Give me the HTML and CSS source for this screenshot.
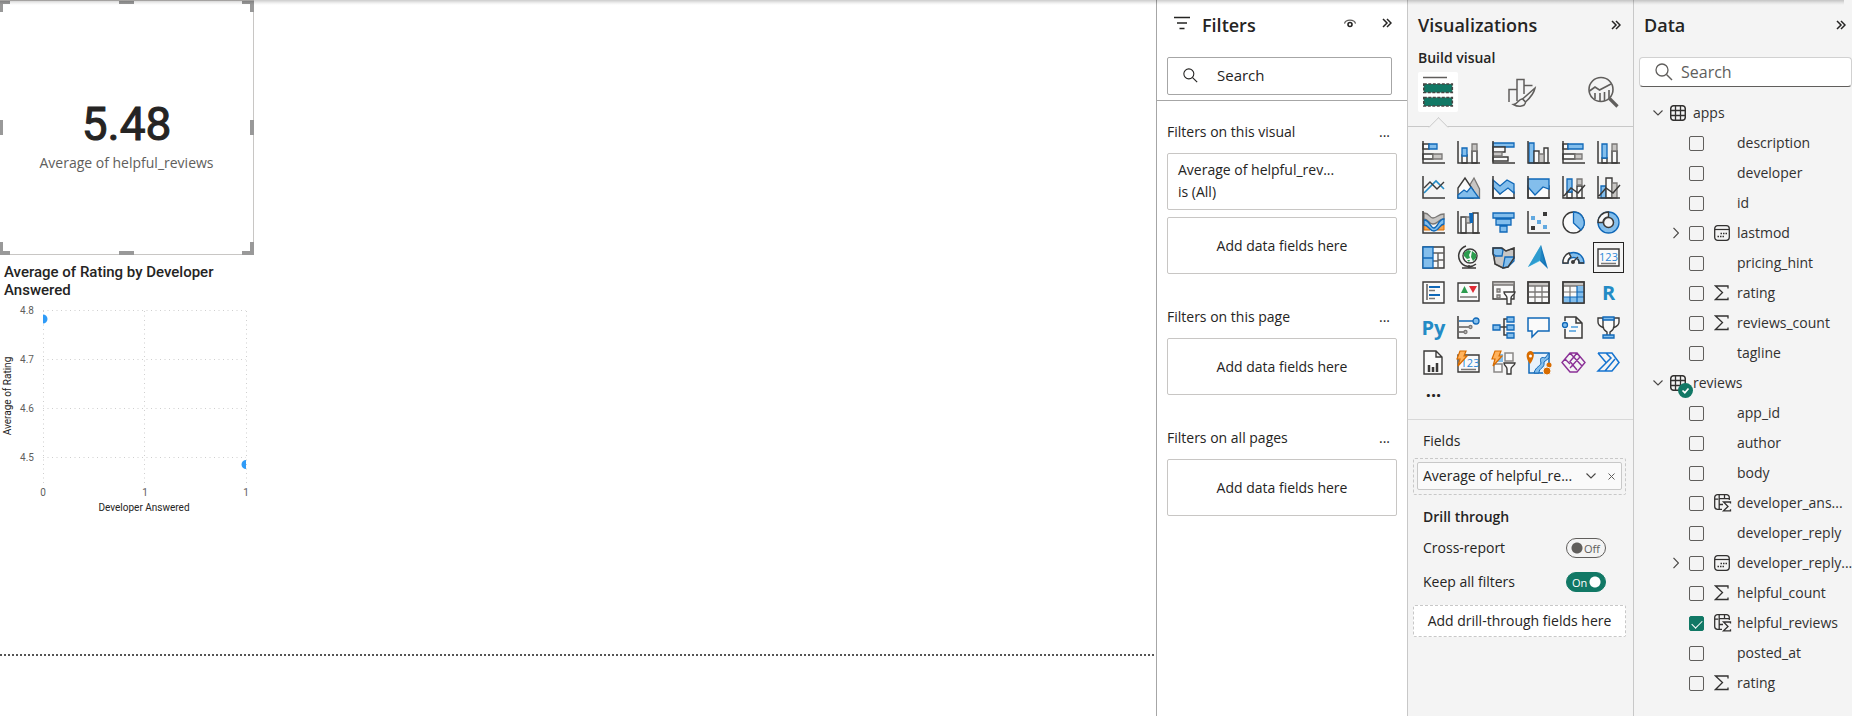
FILE: index.html
```html
<!DOCTYPE html>
<html lang="en">
<head>
<meta charset="utf-8">
<title>Report editor</title>
<link rel="stylesheet" href="styles.css">
</head>
<body>
<svg class="defs" aria-hidden="true">
  <symbol id="collapse" viewBox="0 0 10 10"><path d="M1 1l4 4-4 4M5 1l4 4-4 4" fill="none" stroke="#252423" stroke-width="1.5"/></symbol>
  <symbol id="search" viewBox="0 0 18 18"><circle cx="7" cy="7" r="6" fill="none" stroke="currentColor" stroke-width="1.3"/><path d="M11.5 11.5L17 17" stroke="currentColor" stroke-width="1.4"/></symbol>
  <symbol id="down" viewBox="0 0 10 6"><path d="M.5.5L5 5 9.500.5" fill="none" stroke="#484644" stroke-width="1.1"/></symbol>
  <symbol id="right" viewBox="0 0 6 12"><path d="M.5.8L5.500 6 .5 11.200" fill="none" stroke="#484644" stroke-width="1.2"/></symbol>
  <symbol id="table" viewBox="0 0 16 16"><rect x=".7" y=".7" width="14.600" height="14.600" rx="3" fill="none" stroke="#323130" stroke-width="1.500"/><path d="M5.500 1v14M10.500 1v14M1 5.500h14M1 10.500h14" stroke="#323130" stroke-width="1.300"/></symbol>
  <symbol id="calendar" viewBox="0 0 16 16"><rect x=".7" y=".7" width="14.600" height="14.600" rx="3" fill="none" stroke="#323130" stroke-width="1.300"/><path d="M1 4.500h14" stroke="#323130" stroke-width="1.200"/><path d="M6.500 8.500h1.500M9 8.500h1.500M11.500 8.500h1.500M3.500 11.500h1.500M6 11.500h1.500M8.500 11.500h1.500" stroke="#323130" stroke-width="1.500"/></symbol>
  <symbol id="sigma" viewBox="0 0 16 16"><path d="M14 3.500V1H1.500L8.500 7.500 1.500 14.500H14V12.500" fill="none" stroke="#323130" stroke-width="1.300"/></symbol>
  <symbol id="calc" viewBox="0 0 18 18"><path d="M15.300 6V3.500A2.800 2.800 0 0 0 12.500.7h-9A2.800 2.800 0 0 0 .7 3.500v9a2.800 2.800 0 0 0 2.800 2.800H8M5.200 1v14M.7 5.200h3.500M5 4.700h10M5 10.500h4M10.500 1v4" fill="none" stroke="#323130" stroke-width="1.300"/><path d="M16.500 9.500V8H9.500l4.500 4.500-4.500 4.300h7v-1.600" fill="none" stroke="#323130" stroke-width="1.300"/></symbol>
</svg>
<div class="app">
  <main class="canvas">
    <section class="card">
      <i class="handle tl"></i><i class="handle tc"></i><i class="handle tr"></i>
      <i class="handle ml"></i><i class="handle mr"></i>
      <i class="handle bl"></i><i class="handle bc"></i><i class="handle br"></i>
      <div class="card-value">5.48</div>
      <div class="card-label">Average of helpful_reviews</div>
    </section>
    <section class="scatter">
      <h2 class="chart-title">Average of Rating by Developer Answered</h2>
      <svg class="chart" width="256" height="220" viewBox="0 0 256 220">
        <g stroke="#cfcfcf" stroke-dasharray="1 3.500" fill="none">
          <path d="M43 11.500H246M43 60.500H246M43 109.500H246M43 158.500H246"/>
          <path d="M43.500 12V186M144.500 12V186M246.500 12V186"/>
        </g>
        <path d="M43 15.500a4.500 4.500 0 0 1 0 9zM246 161a4.500 4.500 0 0 0 0 9z" fill="#2f9bf7"/>
        <g class="tick">
          <text x="34" y="15" text-anchor="end">4.8</text><text x="34" y="64" text-anchor="end">4.7</text>
          <text x="34" y="113" text-anchor="end">4.6</text><text x="34" y="162" text-anchor="end">4.5</text>
          <text x="43" y="197" text-anchor="middle">0</text><text x="145" y="197" text-anchor="middle">1</text><text x="246" y="197" text-anchor="middle">1</text>
        </g>
        <g class="axis">
          <text x="144" y="212" text-anchor="middle">Developer Answered</text>
          <text transform="translate(11 97) rotate(-90)" text-anchor="middle">Average of Rating</text>
        </g>
      </svg>
    </section>
    <div class="page-end"></div>
  </main>

  <aside class="filters">
    <header class="filters-head">
      <svg width="16" height="14" viewBox="0 0 16 14"><path d="M0 1.500h16M3 7h10M5.500 12.500h5" stroke="#252423" stroke-width="1.500"/></svg>
      <h2>Filters</h2>
      <button class="icon-btn eye" aria-label="Show filters"><svg width="12" height="9" viewBox="0 0 12 9"><path d="M.5 4.500C1.500 0 10.500 0 11.500 4.500" fill="none" stroke="#605e5c" stroke-width="1.200"/><circle cx="6" cy="5.500" r="2" fill="none" stroke="#252423" stroke-width="1.600"/></svg></button>
      <button class="icon-btn" aria-label="Collapse filters"><svg width="10" height="10"><use href="#collapse"/></svg></button>
    </header>
    <div class="filters-search-row">
      <label class="filters-search"><svg width="15" height="15"><use href="#search"/></svg><input type="text" placeholder="Search" aria-label="Search filters"></label>
    </div>
    <div class="filters-body">
      <section class="filter-group">
        <div class="filter-title"><h3>Filters on this visual</h3><button class="more" aria-label="More options">...</button></div>
        <div class="filter-box filter-item"><span>Average of helpful_rev...</span><span>is (All)</span></div>
        <div class="filter-box drop">Add data fields here</div>
      </section>
      <section class="filter-group">
        <div class="filter-title"><h3>Filters on this page</h3><button class="more" aria-label="More options">...</button></div>
        <div class="filter-box drop">Add data fields here</div>
      </section>
      <section class="filter-group">
        <div class="filter-title"><h3>Filters on all pages</h3><button class="more" aria-label="More options">...</button></div>
        <div class="filter-box drop">Add data fields here</div>
      </section>
    </div>
  </aside>

  <aside class="viz">
    <header class="pane-head"><h2>Visualizations</h2><button class="icon-btn" aria-label="Collapse visualizations"><svg width="10" height="10"><use href="#collapse"/></svg></button></header>
    <h3 class="build">Build visual</h3>
    <div class="tabs">
      <button class="tab active" aria-label="Build visual"><svg width="40" height="40" viewBox="0 0 40 40"><path d="M5 5.500h24" stroke="#605e5c" stroke-width="1.500"/><g fill="#117865" stroke="#484644" stroke-width="1.600" stroke-dasharray="3 1.500"><rect x="5.800" y="12" width="28.500" height="8.500"/><rect x="5.800" y="25.500" width="28.500" height="8.500"/></g></svg></button>
      <button class="tab" aria-label="Format visual"><svg width="40" height="40" viewBox="2 0 40 40"><g fill="none" stroke="#605e5c" stroke-width="1.500"><path d="M10 30V17.500h8M18 29V7.500h7V22M25 13.500h8.500"/><path fill="#f4f4f4" d="M36 16L23.500 27l3 3C31 26 35 21 36 16z"/><path fill="#f4f4f4" d="M23.500 27c-4-.5-4 5-9 5.500 5 3 12 2 12-2.500z"/></g></svg></button>
      <button class="tab" aria-label="Analytics"><svg width="40" height="40" viewBox="0 0 40 40"><g fill="none" stroke="#605e5c" stroke-width="1.600"><circle cx="18" cy="17.500" r="12"/><path d="M6.500 19l5.500-4 4.500 3L28 12M12 27v-6M17 29v-8M21.500 29v-9M26 26v-8"/><path stroke-width="3.200" d="M26.500 26.500L34.500 34.500"/></g></svg></button>
    </div>
    <div class="gallery">
      <button aria-label="Stacked bar chart"><svg viewBox="0 0 23 23"><g class="w"><path d="M1 3h6v5H1zM1 13h10v5H1z"/></g><path class="b" d="M7 3h8v5H7z"/><path class="g" d="M11 13h9v5h-9z"/><path class="k" d="M1 0V22H23"/></svg></button>
      <button aria-label="Stacked column chart"><svg viewBox="0 0 23 23"><path class="w" d="M5 14h5v8H5zM15 10h5v12h-5z"/><path class="b" d="M5 7h5v8H5z"/><path class="g" d="M15 3h5v7h-5z"/><path class="k" d="M1 0V22H23"/></svg></button>
      <button aria-label="Clustered bar chart"><svg viewBox="0 0 23 23"><path class="b" d="M1 2h21v4H1z"/><path class="w" d="M1 6h12v5H1zM1 16h15v4H1z"/><path class="g" d="M1 11h9v4H1z"/><path class="k" d="M1 0V22H23"/></svg></button>
      <button aria-label="Clustered column chart"><svg viewBox="0 0 23 23"><path class="b" d="M2 2h5v20H2z"/><path class="w" d="M7 10h5v12H7zM17 7h4v15h-4z"/><path class="g" d="M12 13h5v9h-5z"/><path class="k" d="M1 0V22H23"/></svg></button>
      <button aria-label="100% stacked bar chart"><svg viewBox="0 0 23 23"><path class="w" d="M1 3h5v5H1zM1 13h12v5H1z"/><path class="b" d="M6 3h15v5H6z"/><path class="g" d="M13 13h7v5h-7z"/><path class="k" d="M1 0V22H23"/></svg></button>
      <button aria-label="100% stacked column chart"><svg viewBox="0 0 23 23"><path class="w" d="M5 17h5v5H5zM15 10h5v12h-5z"/><path class="b" d="M5 3h5v14H5z"/><path class="g" d="M15 3h5v7h-5z"/><path class="k" d="M1 0V22H23"/></svg></button>

      <button aria-label="Line chart"><svg viewBox="0 0 23 23"><path class="bl" d="M2 17L14 5l8 8"/><path class="kl" d="M2 12l6-6 7 7 7-7"/><path class="k" d="M1 0V22H23"/></svg></button>
      <button aria-label="Area chart"><svg viewBox="0 0 23 23"><path class="g" d="M11 22V12L17 2l5.500 11v9z"/><path class="w" d="M1 22V12L8 2l8 12v8z"/><path class="b" d="M1 22v-3l6-5 3 2 4-5 8 11z"/></svg></button>
      <button aria-label="Stacked area chart"><svg viewBox="0 0 23 23"><path class="w" d="M1 10l7 8 8-8 6 6v6H1z"/><path class="b" d="M1 4l7 6 7-6 7 4v9l-6-5-8 6-7-7z"/><path class="k" d="M1 0V22H23"/></svg></button>
      <button aria-label="100% stacked area chart"><svg viewBox="0 0 23 23"><path class="w" d="M1 10h21v12H1z"/><path class="b" d="M1 3h21v10l-6-2-8 8-7-8z"/><path class="k" d="M1 0V22H23"/></svg></button>
      <button aria-label="Line and stacked column chart"><svg viewBox="0 0 23 23"><path class="w" d="M5 16h5v6H5zM15 10h5v12h-5z"/><path class="b" d="M5 3h5v13H5z"/><path class="g" d="M15 3h5v6h-5z"/><path class="k" d="M1 0V22H23M2 20l7-8 7 5 7-8"/></svg></button>
      <button aria-label="Line and clustered column chart"><svg viewBox="0 0 23 23"><path class="b" d="M4 10h5v12H4z"/><path class="w" d="M9 2h6v20H9z"/><path class="g" d="M15 7h5v15h-5z"/><path class="k" d="M1 0V22H23M2 20l7-8 7 5 7-8"/></svg></button>

      <button aria-label="Ribbon chart"><svg viewBox="0 0 23 23"><path d="M2 14h6v5H2zM15 14h7v5h-7z" fill="#f7a14a" stroke="#d86c00"/><path class="g" d="M2 2c6 0 5 5 9 5s5-4 11-4v5c-6 0-6 5-11 5S7 8 2 8z"/><path class="b" d="M2 9c6 0 6 8 10 8s4-9 10-9v5c-4 0-5 7-10 7S7 14 2 14z"/><path class="k" d="M1 0V22H23"/></svg></button>
      <button aria-label="Waterfall chart"><svg viewBox="0 0 23 23"><path class="w" d="M4 6h5v16H4zM16 2h5v20h-5z"/><path class="g" d="M9 6h4v6H9z"/><path d="M12 2h4v10h-3z" fill="#1068b8"/><path class="k" d="M1 0V22H23"/></svg></button>
      <button aria-label="Funnel chart"><svg viewBox="0 0 23 23"><path class="b" d="M1 2h21v5H1zM4 8h15v6H4zM8 15h7v6H8z"/></svg></button>
      <button aria-label="Scatter chart"><svg viewBox="0 0 23 23"><path d="M4 5h4v4H4zM10 9h4v4h-4zM16 14h4v4h-4z" fill="#62a9e0"/><path d="M16 1h4v4h-4zM4 15h4v4H4z" fill="#3b3a39"/><path class="k" d="M1 0V22H23"/></svg></button>
      <button aria-label="Pie chart"><svg viewBox="0 0 23 23"><circle class="w" cx="11.500" cy="11.500" r="10.500"/><path class="b" d="M11.500 1a10.500 10.500 0 0 1 7.500 18l-7.500-7z"/></svg></button>
      <button aria-label="Donut chart"><svg viewBox="0 0 23 23"><circle class="b" cx="11.500" cy="11.500" r="10.500"/><path class="w" d="M11.500 1A10.500 10.500 0 0 0 1 11.500h5a5.500 5.500 0 0 1 5.500-5.500z"/><circle cx="11.500" cy="11.500" r="5" fill="#f4f4f4" stroke="#3b3a39" stroke-width="1.500"/></svg></button>

      <button aria-label="Treemap"><svg viewBox="0 0 23 23"><path class="w" d="M1 1h21v21H1z"/><path d="M11 7h11M16 7v15M11 15h5M16 14h6" fill="none" stroke="#605e5c" stroke-width="1.400"/><path class="b" d="M1 1h10v11H1zM1 12h10v10H1z"/></svg></button>
      <button aria-label="Map"><svg viewBox="0 0 23 23"><circle cx="13" cy="10" r="7" class="w"/><path d="M7 7l4-3 3 1-2 4 1 3-3 1-3-3zM15 5l4 3v4l-3 3-2-4zM10 14l3 0-1 2z" fill="#2c9c4e"/><path class="k" d="M9 0a10.500 10.500 0 1 0 10 18M12 19v3M5 22h14"/></svg></button>
      <button aria-label="Filled map"><svg viewBox="0 0 23 23"><path class="g" d="M10 3l4 2 8-3v10l-6 9-5 1-8-4-1-6z"/><path class="b" d="M1 2h8l2 2-1 6H4L1 8z"/><path class="b" d="M13 11h9v4l-6 6-5 1z"/><path class="kl" d="M1 2h9l4 3 8-3v10l-6 9-5 1-8-4-1-7-1-3z"/></svg></button>
      <button aria-label="Azure map"><svg viewBox="0 0 23 23"><path d="M14-1L1 21l12-6z" fill="#49c0e8"/><path d="M14-1l7 24-8-8z" fill="#1475b9"/><path d="M14-1L1 21l12-7 4 3z" fill="#238bc5" fill-opacity=".7"/></svg></button>
      <button aria-label="Gauge"><svg viewBox="0 0 23 23"><path class="b" d="M1 17A10.500 10.500 0 0 1 22 17h-5a5.500 5.500 0 0 0-11 0z"/><path class="w" d="M1 17A10.500 10.500 0 0 1 7 7l2 4a6 6 0 0 0-3 6z"/><path class="kl" d="M22 17h-5a6 6 0 0 0-1-4M10 17l6-6"/><circle cx="11" cy="16" r="2" fill="#3b3a39"/></svg></button>
      <button class="selected" aria-label="Card"><svg viewBox="0 0 23 23"><path class="w" d="M1 3h21v17H1z"/><path d="M4 17.500h15" stroke="#797775" stroke-width="1.500"/><text x="11.500" y="14.500" class="num">123</text></svg></button>

      <button aria-label="Multi-row card"><svg viewBox="0 0 23 23"><path class="w" d="M1 1h21v21H1z"/><path d="M5 3v16" stroke="#605e5c" stroke-width="1.500"/><path d="M7 6h11M7 14h11" stroke="#1068b8" stroke-width="2"/><path d="M7 9.500h6M7 17.500h6" stroke="#797775" stroke-width="1.500"/></svg></button>
      <button aria-label="KPI"><svg viewBox="0 0 23 23"><path class="w" d="M1 2h21v18H1z"/><path d="M4 12l3.500-7L11 12z" fill="#2c9c4e"/><path d="M12 5h8l-4 7z" fill="#e02b35"/><path d="M3 16h17" stroke="#797775" stroke-width="1.500"/></svg></button>
      <button aria-label="Slicer"><svg viewBox="0 0 23 23"><path class="w" d="M1 1h21v17H1z"/><path class="g" d="M1 1h21v3H1zM5 8h3v3H5zM5 14h3v3H5z"/><path class="w" d="M12 11h11c0 3-4 3-4 6v6h-4v-6c0-3-3-3-3-6z"/></svg></button>
      <button aria-label="Table"><svg viewBox="0 0 23 23"><path class="w" d="M1 1h21v21H1z"/><path class="g" d="M1 1h21v4H1z"/><path d="M8 5v17M15 5v17M1 11h21M1 16h21" stroke="#797775" stroke-width="1.300"/><path class="k" d="M1 1h21v21H1z"/></svg></button>
      <button aria-label="Matrix"><svg viewBox="0 0 23 23"><path class="w" d="M1 1h21v21H1z"/><path class="g" d="M1 1h21v4H1z"/><path d="M15 5h7v17H1v-6h14z" fill="#83beec"/><path d="M8 5v11M1 11h14" stroke="#797775" stroke-width="1.200"/><path d="M8 16v6M15 5v17M15 11h7M1 16h21" stroke="#1068b8" stroke-width="1.200"/><path class="k" d="M1 1h21v21H1z"/></svg></button>
      <button aria-label="R script visual"><span class="letters">R</span></button>

      <button aria-label="Python visual"><span class="letters">Py</span></button>
      <button aria-label="Key influencers"><svg viewBox="0 0 23 23"><path d="M2 5h14" stroke="#1068b8" stroke-width="1.500"/><circle class="b" cx="19" cy="5" r="3"/><path d="M2 11h10M2 16h5" stroke="#605e5c" stroke-width="1.500"/><circle class="g" cx="13.500" cy="11" r="1.500"/><circle class="g" cx="8.500" cy="16" r="1.500"/><path class="k" d="M1 0V22H23"/></svg></button>
      <button aria-label="Decomposition tree"><svg viewBox="0 0 23 23"><path class="k" d="M8 11h7M15 3h-3v16h3"/><path class="b" d="M1 9h7v5H1zM15 1h7v5h-7zM15 9h7v5h-7zM15 17h7v5h-7z"/></svg></button>
      <button aria-label="Q&amp;A"><svg viewBox="0 0 23 23"><path d="M1 2h21v13H11l-6 6v-6H1z" fill="#fafafa" stroke="#1068b8" stroke-width="1.500"/></svg></button>
      <button aria-label="Smart narrative"><svg viewBox="0 0 23 23"><path d="M3 1h11l6 6v15H3z" fill="#fafafa"/><path class="k" d="M3 5V1h11l6 6v15H3v-9M14 1v6h6"/><path d="M9 11h7M7 15h7" stroke="#4b9ddd" stroke-width="1.500"/><circle class="b" cx="3" cy="9" r="2.500"/></svg></button>
      <button aria-label="Metrics"><svg viewBox="0 0 23 23"><path class="w" d="M6 2H1v4c0 4 4 5 6 6M17 2h5v4c0 4-4 5-6 6M6 2h11v8c0 4-3 5-4 6v4h-3v-4c-1-1-4-2-4-6z"/><path class="b" d="M6 1h11v3H6zM6 19h11v3H6z"/></svg></button>

      <button aria-label="Paginated report"><svg viewBox="0 0 23 23"><path class="w" d="M2 0h12l6 6v17H2zM14 0v6h6"/><path d="M7 14v7M11 16v5M15 12v9" stroke="#3b3a39" stroke-width="2.500"/></svg></button>
      <button aria-label="Card (new)"><svg viewBox="0 0 23 23"><path class="w" d="M1 4h21v17H1z"/><path d="M4 18.500h15" stroke="#797775" stroke-width="1.500"/><text x="13" y="15.500" class="num">123</text><path class="bolt" d="M3 0h6L7 5h3L1 15l2-7H0z"/></svg></button>
      <button aria-label="Slicer (new)"><svg viewBox="0 0 23 23"><path d="M2 3h9v8H2z" fill="#83beec"/><path d="M13 2h8v8h-8zM2 13h8v8H2z" fill="#fafafa" stroke="#8a8886" stroke-width="1.500"/><path class="w" d="M12 12h11c0 3-4 3-4 6v5h-4v-5c0-3-3-3-3-6z"/><path class="bolt" d="M3 0h6L7 5h3L1 15l2-7H0z"/></svg></button>
      <button aria-label="ArcGIS map"><svg viewBox="0 0 23 23"><path d="M2 2h20v20H2z" fill="#e8f2fb" stroke="#1068b8" stroke-width="1.500"/><path d="M22 2l-4 5c-5-2-5 2-4 5-1 4-5 3-7 10h5c0-6 6-4 5-11l5-4z" fill="#83beec" stroke="#1068b8"/><path d="M3 13C-3 5 0 0 3.500 0S9 5 3 13z" fill="#d86c00"/><circle cx="3.500" cy="5" r="1.500" fill="#fff"/><circle cx="22" cy="14" r="2.500" fill="#d86c00"/><circle cx="20" cy="20" r="4" fill="#d86c00" stroke="#f4f4f4"/></svg></button>
      <button aria-label="Power Apps"><svg viewBox="0 0 23 23"><path d="M8 2h7l8 9.500L15 21H8L0 11.500zM8 2l12 13M15 2L8 10.500 15 19M15 2l3 4-10 11M3 8l5 5" fill="none" stroke="#8a2f96" stroke-width="1.400"/></svg></button>
      <button aria-label="Power Automate"><svg viewBox="0 0 23 23"><path d="M1 2h14l7 9.500L15 20H1l13-13M1 2l8 9.500M9 2l5 5-6 6M8 20l10-12" fill="none" stroke="#1473d0" stroke-width="1.500"/></svg></button>
      <button class="get-more" aria-label="Get more visuals">...</button>
    </div>
    <div class="wells">
      <h3>Fields</h3>
      <div class="well"><div class="pill"><span>Average of helpful_re...</span><button class="icon-btn" aria-label="Field menu"><svg width="10" height="6"><use href="#down"/></svg></button><button class="icon-btn" aria-label="Remove field"><svg width="7" height="7" viewBox="0 0 7 7"><path d="M.5.5l6 6M6.500.5l-6 6" stroke="#605e5c"/></svg></button></div></div>
      <h3 class="drill">Drill through</h3>
      <label class="switch-row"><span>Cross-report</span><span class="switch"><input type="checkbox" role="switch"><span class="off">Off</span></span></label>
      <label class="switch-row"><span>Keep all filters</span><span class="switch"><input type="checkbox" role="switch" checked><span class="on">On</span></span></label>
      <div class="well empty">Add drill-through fields here</div>
    </div>
  </aside>

  <aside class="data">
    <header class="pane-head"><h2>Data</h2><button class="icon-btn" aria-label="Collapse data"><svg width="10" height="10"><use href="#collapse"/></svg></button></header>
    <label class="data-search"><svg width="18" height="18"><use href="#search"/></svg><input type="text" placeholder="Search" aria-label="Search data"></label>
    <ul class="tree">
      <li class="entity"><svg width="10" height="6"><use href="#down"/></svg><svg width="16" height="16"><use href="#table"/></svg><span>apps</span></li>
      <li><label class="field"><i></i><input type="checkbox"><i></i><span>description</span></label></li>
      <li><label class="field"><i></i><input type="checkbox"><i></i><span>developer</span></label></li>
      <li><label class="field"><i></i><input type="checkbox"><i></i><span>id</span></label></li>
      <li><label class="field"><svg width="6" height="12"><use href="#right"/></svg><input type="checkbox"><svg width="16" height="16"><use href="#calendar"/></svg><span>lastmod</span></label></li>
      <li><label class="field"><i></i><input type="checkbox"><i></i><span>pricing_hint</span></label></li>
      <li><label class="field"><i></i><input type="checkbox"><svg width="16" height="16"><use href="#sigma"/></svg><span>rating</span></label></li>
      <li><label class="field"><i></i><input type="checkbox"><svg width="16" height="16"><use href="#sigma"/></svg><span>reviews_count</span></label></li>
      <li><label class="field"><i></i><input type="checkbox"><i></i><span>tagline</span></label></li>
      <li class="entity"><svg width="10" height="6"><use href="#down"/></svg><span class="badged"><svg width="16" height="16"><use href="#table"/></svg><svg class="badge" width="15" height="15" viewBox="0 0 15 15"><circle cx="7.500" cy="7.500" r="7.500" fill="#117865"/><path d="M4.500 7.500l2.300 2.200L10.500 5.500" fill="none" stroke="#fff" stroke-width="1.700"/></svg></span><span>reviews</span></li>
      <li><label class="field"><i></i><input type="checkbox"><i></i><span>app_id</span></label></li>
      <li><label class="field"><i></i><input type="checkbox"><i></i><span>author</span></label></li>
      <li><label class="field"><i></i><input type="checkbox"><i></i><span>body</span></label></li>
      <li><label class="field"><i></i><input type="checkbox"><svg width="18" height="18"><use href="#calc"/></svg><span>developer_ans...</span></label></li>
      <li><label class="field"><i></i><input type="checkbox"><i></i><span>developer_reply</span></label></li>
      <li><label class="field"><svg width="6" height="12"><use href="#right"/></svg><input type="checkbox"><svg width="16" height="16"><use href="#calendar"/></svg><span>developer_reply...</span></label></li>
      <li><label class="field"><i></i><input type="checkbox"><svg width="16" height="16"><use href="#sigma"/></svg><span>helpful_count</span></label></li>
      <li><label class="field"><i></i><input type="checkbox" checked><svg width="18" height="18"><use href="#calc"/></svg><span>helpful_reviews</span></label></li>
      <li><label class="field"><i></i><input type="checkbox"><i></i><span>posted_at</span></label></li>
      <li><label class="field"><i></i><input type="checkbox"><svg width="16" height="16"><use href="#sigma"/></svg><span>rating</span></label></li>
    </ul>
  </aside>
</div>
</body>
</html>
```
FILE: styles.css
```css
* { box-sizing: border-box; }
body { margin: 0; font: 15px/20px "Open Sans", "Noto Sans", sans-serif; color: #252423; background: #fff; }
body::before { content: ""; position: absolute; z-index: 5; top: 0; left: 0; right: 8px; height: 5px; background: linear-gradient(rgba(0,0,0,.2), rgba(0,0,0,.06) 60%, transparent); pointer-events: none; }
h2, h3 { margin: 0; font-weight: 400; font-size: inherit; }
button { padding: 0; border: 0; background: none; color: inherit; font: inherit; }
input { font: inherit; color: inherit; }
input::placeholder { color: inherit; opacity: 1; }
svg { display: block; flex: none; }
.defs { position: absolute; width: 0; height: 0; }
.app { display: flex; min-height: 100vh; }

.canvas { flex: 1; min-width: 0; display: flex; flex-direction: column; align-items: flex-start; }
.card { position: relative; width: 254px; height: 255px; border: 1px solid #c8c6c4; border-left: 0; display: flex; flex-direction: column; align-items: center; padding-top: 98px; }
.card-value { font: 400 46px/50px Roboto, sans-serif; -webkit-text-stroke: 1px #252423; }
.card-label { font-size: 14px; line-height: 28px; color: #605e5c; }
.handle { position: absolute; border: 0 solid #999; }
.tl, .tr, .bl, .br { width: 10px; height: 11px; }
.tl, .tr { top: 0; border-top-width: 3px; }
.bl, .br { bottom: -1px; height: 13px; border-bottom-width: 4px; }
.tl, .bl { left: 0; border-left-width: 3px; }
.tr, .br { right: -1px; border-right-width: 4px; width: 12px; }
.tc, .bc { left: 119px; width: 15px; border-top-width: 3px; }
.tc { top: 0; }
.bc { bottom: -1px; border-top-width: 4px; }
.ml, .mr { top: 119px; height: 15px; border-left-width: 3px; }
.ml { left: 0; }
.mr { right: -1px; border-left-width: 4px; }
.scatter { width: 256px; padding-top: 8px; }
.chart-title { padding: 0 4px; font: 500 15px/18px Roboto, sans-serif; }
.chart { font-family: Roboto, sans-serif; }
.tick { font-size: 10px; fill: #605e5c; }
.axis { font-size: 10px; fill: #252423; }
.page-end { align-self: stretch; margin: 135px 2px 0 0; border-top: 2px dotted #555; }

.icon-btn { display: flex; align-items: center; justify-content: center; }
.filters { width: 251px; flex: none; border-left: 1px solid #a6a6a6; }
.filters-head { display: flex; align-items: center; height: 50px; padding: 0 15px 4px 17px; }
.filters-head h2 { margin: 4px 0 0 12px; }
.filters-head h2, .pane-head h2 { font-size: 18px; font-weight: 600; line-height: 26px; }
.eye { margin: 0 26px 0 auto; }
.filters-search-row { padding: 7px 15px 5px 10px; border-bottom: 1px solid #a6a6a6; }
.filters-search { display: flex; align-items: center; height: 38px; padding: 0 0 2px 15px; gap: 19px; border: 1px solid #a6a6a6; border-radius: 2px; }
.filters-search input { flex: 1; min-width: 0; border: 0; padding: 0; background: none; }
.filters-body { padding: 16px 10px 0; }
.filter-group { display: flex; flex-direction: column; margin-bottom: 28px; }
.filter-title { display: flex; align-items: center; justify-content: space-between; height: 30px; margin-bottom: 6px; padding-right: 7px; font-size: 14px; }
.filter-box { height: 57px; border: 1px solid #c8c6c4; border-radius: 2px; font-size: 14px; }
.filter-box + .filter-box { margin-top: 7px; }
.filter-item { display: flex; flex-direction: column; padding: 5px 10px; line-height: 22px; }
.drop { display: flex; align-items: center; justify-content: center; }

.viz { width: 226px; flex: none; background: #f4f4f4; border-left: 1px solid #c8c8c8; }
.pane-head { display: flex; align-items: center; justify-content: space-between; height: 48px; padding: 2px 12px 0 10px; }
.build { height: 24px; padding-left: 10px; font-size: 14px; font-weight: 600; }
.tabs { display: flex; justify-content: space-between; padding: 0 10px 14px; border-bottom: 1px solid #c8c8c8; }
.tab { position: relative; width: 40px; height: 40px; border-radius: 2px; }
.tab.active { background: #fff; }
.tab.active::after { content: ""; position: absolute; left: 13px; top: 48px; width: 14px; height: 14px; transform: rotate(45deg); background: #f4f4f4; border: solid #c8c8c8; border-width: 1px 0 0 1px; clip-path: polygon(0 0, 100% 0, 0 100%); }
.gallery { display: grid; grid-template-columns: repeat(6, 35px); grid-auto-rows: 35px; padding: 8px 8px 4px; border-bottom: 1px solid #d8d8d8; }
.gallery button { display: flex; align-items: center; justify-content: center; }
.gallery svg { width: 23px; height: 23px; overflow: visible; }
.gallery .selected { width: 31px; height: 31px; place-self: center; border: 1px solid #252423; }
.gallery .get-more { font-size: 18px; font-weight: 700; line-height: 20px; padding-bottom: 16px; }
.k { fill: none; stroke: #3b3a39; stroke-width: 1.5; }
.kl { fill: none; stroke: #3b3a39; stroke-width: 1.4; }
.bl { fill: none; stroke: #238bc5; stroke-width: 1.6; }
.b { fill: #83beec; stroke: #1068b8; stroke-width: 1.3; }
.g { fill: #c8c6c4; stroke: #797775; stroke-width: 1.3; }
.w { fill: #fafafa; stroke: #3b3a39; stroke-width: 1.4; }
.bolt { fill: #ffb25c; stroke: #d86c00; stroke-width: 1.2; }
.num { font-size: 11px; fill: #2b88d8; text-anchor: middle; }
.letters { font-size: 20px; font-weight: 700; color: #238bc5; }
.wells { padding: 6px 7px 0 5px; }
.wells h3, .switch-row { height: 34px; padding: 5px 10px 0; font-size: 14px; }
.wells h3 { height: 32px; }
.well { border: 1px dashed #c8c8c8; border-radius: 2px; padding: 3px; height: 37px; font-size: 14px; }
.pill { display: flex; align-items: center; gap: 12px; height: 28px; padding: 0 6px 0 5px; border: 1px solid #c8c8c8; border-radius: 2px; background: #fafafa; }
.pill span { flex: 1; white-space: nowrap; }
.wells .drill { height: 38px; padding-top: 12px; font-weight: 600; }
.switch-row { display: flex; justify-content: space-between; padding: 5px 20px 0 10px; }
.switch { position: relative; width: 40px; height: 20px; }
.switch input { appearance: none; width: 40px; height: 20px; margin: 0; border: 1px solid #605e5c; border-radius: 10px; background: radial-gradient(circle at 10px 9px, #605e5c 5px, transparent 6px) #f4f4f4; }
.switch input:checked { border-color: #117865; background: radial-gradient(circle at 28px 9px, #fff 5px, transparent 6px) #117865; }
.on, .off { position: absolute; top: 1px; font-size: 11px; pointer-events: none; }
.off { right: 6px; color: #605e5c; }
.on { left: 6px; color: #fff; }
.well.empty { height: 32px; margin-top: 4px; padding-top: 5px; background: #fff; text-align: center; white-space: nowrap; }

.data { width: 219px; flex: none; background: #f4f4f4; border-left: 1px solid #c8c8c8; }
.data .pane-head { padding: 2px 6px 0 10px; }
.data-search { display: flex; align-items: center; gap: 8px; height: 30px; margin: 9px 0 11px 5px; padding-left: 15px; background: #fff; border: 1px solid #d1d1d1; border-bottom-color: #605e5c; border-radius: 4px; color: #605e5c; font-size: 16px; }
.data-search input { flex: 1; min-width: 0; border: 0; padding: 0; background: none; }
.tree { list-style: none; margin: 0; padding: 0; font-size: 14px; color: #323130; }
.entity { display: grid; grid-template-columns: 10px 16px 1fr; column-gap: 7px; align-items: center; height: 30px; padding-left: 19px; }
.badged { position: relative; }
.badge { position: absolute; left: 8px; top: 8px; }
.field { display: grid; grid-template-columns: 6px 15px 13px 1fr; column-gap: 10px; align-items: center; height: 30px; padding-left: 39px; white-space: nowrap; }
.field input { appearance: none; position: relative; width: 15px; height: 15px; margin: 0; border: 1px solid #605e5c; border-radius: 2px; }
.field input:checked { border-color: #117865; background: #117865; }
.field input:checked::after { content: ""; position: absolute; left: 4px; top: 1px; width: 5px; height: 9px; border: solid #fff; border-width: 0 1px 1px 0; transform: rotate(45deg); }
```
